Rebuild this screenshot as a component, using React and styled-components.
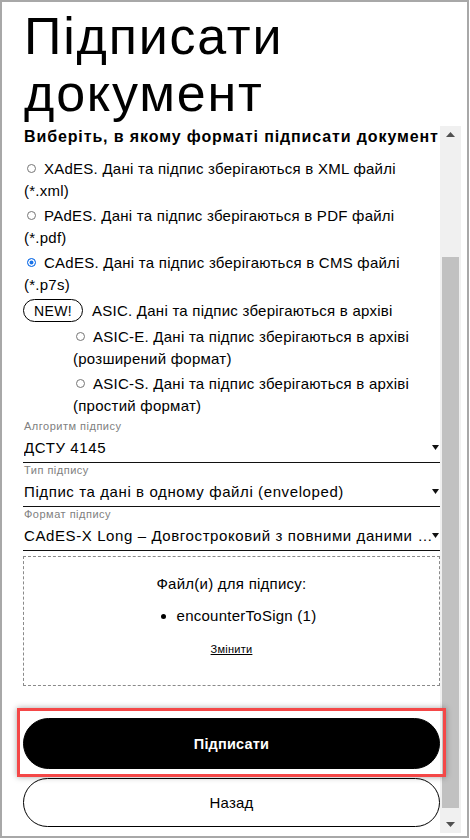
import React from 'react'
import styled, { createGlobalStyle } from 'styled-components'

const GlobalStyle = createGlobalStyle`
  html, body {
    margin: 0;
    padding: 0;
    background: #fff;
  }
  body {
    font-family: "Liberation Sans", Arial, sans-serif;
    color: #000;
  }
  * {
    box-sizing: border-box;
  }
`

const Frame = styled.div`
  width: 469px;
  height: 838px;
  border: 2px solid #a8a8a8;
  display: flex;
  flex-direction: column;
  background: #fff;
  overflow: hidden;
`
const Title = styled.h1`
  margin: 0;
  padding: 6px 0 0 22px;
  height: 124px;
  font-size: 52px;
  line-height: 57px;
  font-weight: 400;
  letter-spacing: 1.8px;
`
const Body = styled.div`
  flex: 1;
  display: flex;
  padding: 0 6px 3px 0;
  min-height: 0;
`
const Content = styled.div`
  flex: 1;
  min-width: 0;
  padding: 0 0 0 21px;
  display: flex;
  flex-direction: column;
  letter-spacing: 0.25px;
`
const Question = styled.div`
  font-size: 16px;
  font-weight: 700;
  line-height: 22px;
  letter-spacing: 0.88px;
  white-space: nowrap;
  overflow: hidden;
  padding: 0 0 0 1px;
`
const Options = styled.div`
  display: flex;
  flex-direction: column;
  gap: 3px;
  margin-top: ${(p) => (p.nested ? '4px' : '10px')};
  padding-left: ${(p) => (p.nested ? '50px' : '1px')};
`
const Option = styled.label`
  font-size: 15px;
  line-height: 22px;
  display: block;
`
const Radio = styled.span`
  display: inline-block;
  width: 9px;
  height: 9px;
  border-radius: 50%;
  margin: 0 8px 0 3px;
  vertical-align: 1px;
  border: 1px solid ${(p) => (p.checked ? '#1a73e8' : '#767676')};
  background: ${(p) => (p.checked ? '#1a73e8' : '#fff')};
  box-shadow: ${(p) => (p.checked ? 'inset 0 0 0 1.5px #fff' : 'none')};
`
const NewRow = styled.div`
  display: flex;
  align-items: center;
  gap: 9px;
  margin-top: 3px;
  font-size: 15px;
  line-height: 22px;
`
const Badge = styled.span`
  width: 60px;
  height: 23px;
  border: 1px solid #000;
  border-radius: 12px;
  display: flex;
  align-items: center;
  justify-content: center;
  font-size: 14px;
  letter-spacing: 0.3px;
`
const Fields = styled.div`
  display: flex;
  flex-direction: column;
  margin-top: 3px;
`
const Field = styled.div`
  display: flex;
  flex-direction: column;
`
const FieldLabel = styled.div`
  font-size: 11px;
  line-height: 13px;
  color: #808080;
  padding-left: 1px;
  letter-spacing: 0.5px;
`
const Select = styled.div`
  display: flex;
  align-items: center;
  height: 30px;
  border-bottom: 1.5px solid #111;
  padding: 0 1px 0 1px;
  margin-bottom: 1px;
`
const SelectValue = styled.div`
  flex: 1;
  min-width: 0;
  font-size: 15px;
  white-space: nowrap;
  overflow: hidden;
  text-overflow: ellipsis;
  padding-bottom: 1px;
  letter-spacing: 0.6px;
`
const Caret = styled.svg`
  flex: none;
  width: 7px;
  height: 5px;
  margin-left: -7px;
`
const DropZone = styled.div`
  margin-top: 4px;
  height: 130px;
  border: 1px dashed #8a8a8a;
  display: flex;
  flex-direction: column;
  align-items: center;
  padding-top: 16px;
`
const DropTitle = styled.div`
  font-size: 15px;
  line-height: 22px;
`
const FileList = styled.ul`
  margin: 10px 0 0 0;
  padding-left: 30px;
  font-size: 15px;
  line-height: 22px;
`
const ChangeLink = styled.a`
  margin-top: 16px;
  font-size: 11px;
  color: #000;
  text-decoration: underline;
`
const Actions = styled.div`
  display: flex;
  flex-direction: column;
  gap: 9px;
  margin-top: 32px;
`
const Highlight = styled.div`
  position: relative;
`
const Marker = styled.div`
  position: absolute;
  top: -10px;
  bottom: -8px;
  left: -6px;
  right: -6px;
  border: 3px solid #f44747;
  box-shadow: 0 0 6px rgba(0, 0, 0, 0.35);
  pointer-events: none;
`
const Button = styled.button`
  width: 100%;
  height: ${(p) => (p.primary ? '51px' : '49px')};
  border-radius: 26px;
  border: 1px solid #000;
  background: ${(p) => (p.primary ? '#000' : '#fff')};
  color: ${(p) => (p.primary ? '#fff' : '#000')};
  font-family: "Liberation Sans", Arial, sans-serif;
  font-size: ${(p) => (p.primary ? '14.5px' : '15px')};
  font-weight: ${(p) => (p.primary ? 700 : 400)};
  letter-spacing: 0.2px;
  cursor: pointer;
`
const ScrollBar = styled.div`
  width: 21px;
  flex: none;
  background: #f0f0f0;
  display: flex;
  flex-direction: column;
  align-items: center;
`
const ScrollArrow = styled.div`
  height: 17px;
  width: 100%;
  display: flex;
  align-items: center;
  justify-content: center;
`
const Thumb = styled.div`
  width: 17px;
  height: 551px;
  margin-top: 114px;
  background: #c1c1c1;
`
const Spacer = styled.div`
  flex: 1;
`

const Arrow = ({ up }) => (
  <svg width="9" height="5" viewBox="0 0 9 5">
    <path d={up ? 'M0 5 L4.5 0 L9 5 Z' : 'M0 0 L9 0 L4.5 5 Z'} fill="#505050" />
  </svg>
)

const Dropdown = ({ label, value }) => (
  <Field>
    <FieldLabel>{label}</FieldLabel>
    <Select>
      <SelectValue>{value}</SelectValue>
      <Caret viewBox="0 0 7 5">
        <path d="M0 0 L7 0 L3.5 5 Z" fill="#111" />
      </Caret>
    </Select>
  </Field>
)

const App = () => {
  return (
    <>
      <GlobalStyle />
      <Frame>
        <Title>Підписати документ</Title>
        <Body>
          <Content>
            <Question>Виберіть, в якому форматі підписати документ</Question>
            <Options>
              <Option><Radio />XAdES. Дані та підпис зберігаються в XML файлі (*.xml)</Option>
              <Option><Radio />PAdES. Дані та підпис зберігаються в PDF файлі (*.pdf)</Option>
              <Option><Radio checked />CAdES. Дані та підпис зберігаються в CMS файлі (*.p7s)</Option>
            </Options>
            <NewRow>
              <Badge>NEW!</Badge>
              <span>ASIC. Дані та підпис зберігаються в архіві</span>
            </NewRow>
            <Options nested>
              <Option><Radio />ASIC-E. Дані та підпис зберігаються в архіві (розширений формат)</Option>
              <Option><Radio />ASIC-S. Дані та підпис зберігаються в архіві (простий формат)</Option>
            </Options>
            <Fields>
              <Dropdown label="Алгоритм підпису" value="ДСТУ 4145" />
              <Dropdown label="Тип підпису" value="Підпис та дані в одному файлі (enveloped)" />
              <Dropdown label="Формат підпису" value="CAdES-X Long – Довгостроковий з повними даними ЦСК для перевірки" />
            </Fields>
            <DropZone>
              <DropTitle>Файл(и) для підпису:</DropTitle>
              <FileList>
                <li>encounterToSign (1)</li>
              </FileList>
              <ChangeLink href="#">Змінити</ChangeLink>
            </DropZone>
            <Actions>
              <Highlight>
                <Button primary>Підписати</Button>
                <Marker />
              </Highlight>
              <Button>Назад</Button>
            </Actions>
          </Content>
          <ScrollBar>
            <ScrollArrow><Arrow up /></ScrollArrow>
            <Thumb />
            <Spacer />
            <ScrollArrow><Arrow /></ScrollArrow>
          </ScrollBar>
        </Body>
      </Frame>
    </>
  )
}

export default App
